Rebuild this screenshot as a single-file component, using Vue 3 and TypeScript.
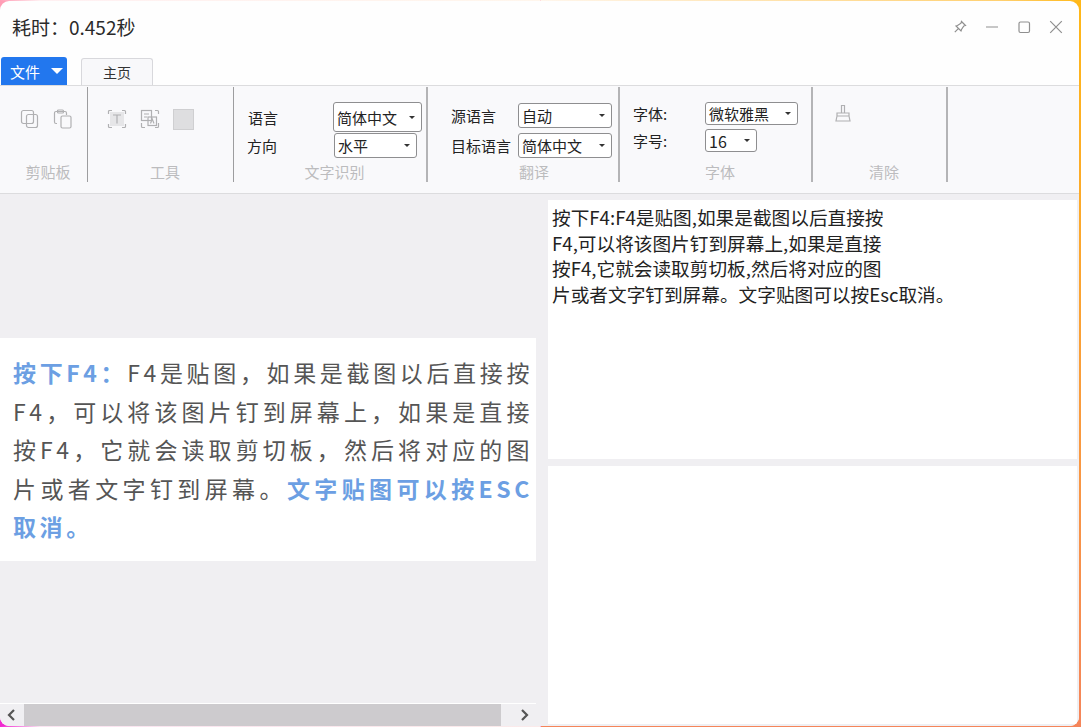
<script setup lang="ts">
interface Group {
  label: string
  width: number
}

interface Segment {
  text: string
  blue?: boolean
}

const groups: Group[] = [
  { label: '剪贴板', width: 88 },
  { label: '工具', width: 146 },
  { label: '文字识别', width: 194 },
  { label: '翻译', width: 192 },
  { label: '字体', width: 193 },
  { label: '清除', width: 135 },
]

// the picture on the left holds the text in fixed lines
const imageLines: Segment[][] = [
  [{ text: '按下F4：', blue: true }, { text: 'F4是贴图，如果是截图以后直接按' }],
  [{ text: 'F4，可以将该图片钉到屏幕上，如果是直接' }],
  [{ text: '按F4，它就会读取剪切板，然后将对应的图' }],
  [{ text: '片或者文字钉到屏幕。' }, { text: '文字贴图可以按ESC', blue: true }],
  [{ text: '取消。', blue: true }],
]
</script>

<template>
  <div class="window">
    <header class="title-bar">
      <span class="title-text">耗时：0.452秒</span>
      <div class="win-actions">
        <svg width="16" height="16" viewBox="0 0 16 16" class="win-icon">
          <path d="M9.500 2.500 13.500 6.500 11.800 7 9.500 10.500 9 12 4 7 5.500 6.500 9 4.200Z M6.300 9.700 2.800 13.200" />
        </svg>
        <svg width="16" height="16" viewBox="0 0 16 16" class="win-icon">
          <path d="M2 8H14" />
        </svg>
        <svg width="16" height="16" viewBox="0 0 16 16" class="win-icon">
          <rect x="3" y="3" width="10.500" height="10.500" rx="1.500" />
        </svg>
        <svg width="16" height="16" viewBox="0 0 16 16" class="win-icon">
          <path d="M2.200 2.200 13.800 13.800M13.800 2.200 2.200 13.800" />
        </svg>
      </div>
    </header>

    <div class="tab-row">
      <button class="file-btn">文件<span class="file-caret"></span></button>
      <div class="tab">主页</div>
    </div>

    <section class="ribbon">
      <!-- 剪贴板 -->
      <div class="group" :style="{ width: groups[0].width + 'px' }">
        <div class="group-body icons-clip">
          <svg width="20" height="20" viewBox="0 0 20 20" class="tool-icon">
            <rect x="1.500" y="1.500" width="12" height="13" rx="2" />
            <rect x="6.500" y="5.500" width="11" height="13" rx="2" />
          </svg>
          <svg width="20" height="20" viewBox="0 0 20 20" class="tool-icon">
            <path d="M4 14.500H3a1.500 1.500 0 0 1-1.500-1.500V4A1.500 1.500 0 0 1 3 2.500h9A1.500 1.500 0 0 1 13.500 4v2" />
            <rect x="4.500" y="1" width="6" height="3" rx="1" />
            <rect x="8" y="7" width="10" height="12" rx="1.500" />
          </svg>
        </div>
        <div class="group-label">{{ groups[0].label }}</div>
      </div>

      <!-- 工具 -->
      <div class="group" :style="{ width: groups[1].width + 'px' }">
        <div class="group-body icons-tool">
          <svg width="20" height="20" viewBox="0 0 20 20" class="tool-icon">
            <rect x="3" y="3" width="14" height="14" fill="#e6e6e8" stroke="none" />
            <path d="M1.500 5V2.500a1 1 0 0 1 1-1H5M15 1.500h2.500a1 1 0 0 1 1 1V5M18.500 15v2.500a1 1 0 0 1-1 1H15M5 18.500H2.500a1 1 0 0 1-1-1V15" />
            <path d="M6 6H14M10 6V14.500" />
          </svg>
          <svg width="20" height="20" viewBox="0 0 20 20" class="tool-icon">
            <path d="M1.500 14v3.500a1 1 0 0 0 1 1H5M15 18.500h2.500a1 1 0 0 0 1-1V14M15 1.500h2.500a1 1 0 0 1 1 1V5" />
            <rect x="1.500" y="1.500" width="10" height="10" />
            <rect x="8" y="8" width="8.500" height="8.500" />
            <path d="M4 5H9M4 8H7M10.500 14.500 12.200 10 14 14.500" />
          </svg>
          <span class="color-swatch"></span>
        </div>
        <div class="group-label">{{ groups[1].label }}</div>
      </div>

      <!-- 文字识别 -->
      <div class="group" :style="{ width: groups[2].width + 'px' }">
        <div class="group-body form-ocr">
          <div class="row">
            <span class="field-label label-ocr">语言</span>
            <div class="select select-tall">简体中文<i class="caret"></i></div>
          </div>
          <div class="row row-dir">
            <span class="field-label label-dir">方向</span>
            <div class="select select-dir">水平<i class="caret"></i></div>
          </div>
        </div>
        <div class="group-label">{{ groups[2].label }}</div>
      </div>

      <!-- 翻译 -->
      <div class="group group-trans" :style="{ width: groups[3].width + 'px' }">
        <div class="group-body form-trans">
          <div class="row">
            <span class="field-label label-trans">源语言</span>
            <div class="select select-trans">自动<i class="caret"></i></div>
          </div>
          <div class="row">
            <span class="field-label label-trans">目标语言</span>
            <div class="select select-trans">简体中文<i class="caret"></i></div>
          </div>
        </div>
        <div class="group-label">{{ groups[3].label }}</div>
      </div>

      <!-- 字体 -->
      <div class="group" :style="{ width: groups[4].width + 'px' }">
        <div class="group-body form-font">
          <div class="row">
            <span class="field-label label-font">字体:</span>
            <div class="select select-font">微软雅黑<i class="caret"></i></div>
          </div>
          <div class="row">
            <span class="field-label label-font">字号:</span>
            <div class="select select-size">16<i class="caret"></i></div>
          </div>
        </div>
        <div class="group-label">{{ groups[4].label }}</div>
      </div>

      <!-- 清除 -->
      <div class="group" :style="{ width: groups[5].width + 'px' }">
        <div class="group-body icons-clear">
          <svg width="18" height="20" viewBox="0 0 18 20" class="tool-icon">
            <path d="M7.500 10V2.500H10.500V10M3 10H15V13H3ZM3 13 2 18H16L15 13" />
          </svg>
        </div>
        <div class="group-label">{{ groups[5].label }}</div>
      </div>
    </section>

    <main class="content">
      <div class="left-pane">
        <div class="image-area">
          <div class="image-card">
            <div v-for="(line, i) in imageLines" :key="i" class="image-line">
              <span v-for="seg in line" :key="seg.text" :class="{ blue: seg.blue }">{{ seg.text }}</span>
            </div>
          </div>
        </div>
        <div class="h-scroll">
          <svg width="24" height="22" viewBox="0 0 24 22" class="scroll-arrow"><path d="M14 6 9 11 14 16" /></svg>
          <div class="scroll-thumb"></div>
          <svg width="24" height="22" viewBox="0 0 24 22" class="scroll-arrow"><path d="M10 6 15 11 10 16" /></svg>
        </div>
      </div>
      <div class="right-pane">
        <div class="text-panel">按下F4:F4是贴图,如果是截图以后直接按<br />F4,可以将该图片钉到屏幕上,如果是直接<br />按F4,它就会读取剪切板,然后将对应的图<br />片或者文字钉到屏幕。文字贴图可以按Esc取消。</div>
        <div class="text-panel"></div>
      </div>
    </main>
  </div>
</template>

<style>
html,
body {
  margin: 0;
  width: 1081px;
  height: 727px;
  overflow: hidden;
  background:
    linear-gradient(to right, #ff9db5, #fff0f2 40px, #fff6ec 100%) left top / 50% 1px no-repeat,
    linear-gradient(to right, #f02ad0, #fbe4f2 40px, #fbeaea 100%) left bottom / 50% 1px no-repeat,
    linear-gradient(to right, #fff6ec, #ffd070 85%, #ffb818 100%) right top / 50% 1px no-repeat,
    linear-gradient(to bottom, #ff9db5, #f02ad0) left top / 50% 100% no-repeat,
    linear-gradient(to bottom, #ffb818, #f5855a) right top / 50% 100% no-repeat;
}
</style>

<style scoped>
.window {
  width: 1079px;
  height: 725px;
  margin-top: 1px;
  display: flex;
  flex-direction: column;
  background: #fefefe;
  border-radius: 9px;
  overflow: hidden;
  font-family: "Noto Sans CJK SC", "Noto Sans", sans-serif;
  color: #222;
}

.title-bar {
  height: 56px;
  flex: none;
  display: flex;
  align-items: center;
  justify-content: space-between;
  padding: 0 15px 5px 12px;
  box-sizing: border-box;
}

.title-text {
  font-size: 19px;
  color: #2a2a2a;
}

.win-actions {
  display: flex;
  align-items: center;
  gap: 16px;
}

.win-icon {
  fill: none;
  stroke: #8f8f8f;
  stroke-width: 1.2;
}

.tab-row {
  height: 28px;
  flex: none;
  display: flex;
  align-items: flex-end;
  padding-left: 1px;
  gap: 14px;
}

.file-btn {
  width: 66px;
  height: 28px;
  border: none;
  padding: 0 0 0 9px;
  border-radius: 3px 3px 0 0;
  background: #2277ee;
  color: #fff;
  font: inherit;
  font-size: 15px;
  display: flex;
  align-items: center;
  gap: 11px;
}

.file-caret {
  border-left: 6px solid transparent;
  border-right: 6px solid transparent;
  border-top: 6px solid #fff;
}

.tab {
  width: 72px;
  height: 27px;
  box-sizing: border-box;
  border: 1px solid #d8d8dc;
  border-bottom: none;
  border-radius: 3px 3px 0 0;
  background: #f8f8fa;
  font-size: 14px;
  display: flex;
  align-items: center;
  justify-content: center;
  color: #333;
}

.ribbon {
  height: 109px;
  flex: none;
  box-sizing: border-box;
  display: flex;
  background: #f9f9fb;
  border-top: 1px solid #dcdcde;
  border-bottom: 1px solid #dcdcde;
  padding-top: 1px;
}

.group {
  height: 95px;
  flex: none;
  box-sizing: border-box;
  display: flex;
  flex-direction: column;
  border-right: 1px solid #9d9d9f;
}

.group:nth-child(n + 3) {
  border-right-width: 2px;
  border-right-color: #b4b4b6;
}

.group-body {
  height: 74px;
  box-sizing: border-box;
}

.group-label {
  text-align: center;
  font-size: 15px;
  line-height: 21px;
  padding-left: 9px;
  color: #bcbcbe;
}

.group-trans .group-label {
  padding-left: 22px;
}

.tool-icon {
  fill: none;
  stroke: #b0b0b2;
  stroke-width: 1.2;
}

.icons-clip {
  display: flex;
  gap: 13px;
  padding: 22px 0 0 20px;
}

.icons-tool {
  display: flex;
  gap: 13px;
  padding: 22px 0 0 19px;
}

.color-swatch {
  width: 21px;
  height: 21px;
  box-sizing: border-box;
  background: #dedee0;
  border: 1px solid #cfcfd1;
}

.icons-clear {
  padding: 16px 0 0 21px;
}

.row {
  display: flex;
  align-items: center;
}

.field-label {
  font-size: 15px;
  color: #222;
  white-space: nowrap;
}

.form-ocr {
  padding: 15px 0 0 14px;
}

.row-dir {
  margin-top: 1px;
}

.label-ocr {
  width: 85px;
}

.label-dir {
  width: 87px;
  margin-left: -1px;
}

.select {
  box-sizing: border-box;
  height: 25px;
  display: flex;
  align-items: center;
  justify-content: space-between;
  padding: 0 6px 0 3px;
  border: 1px solid #8e8e90;
  border-radius: 3px;
  background: #fff;
  font-size: 15px;
  color: #222;
}

.select-tall {
  width: 89px;
  height: 30px;
}

.select-dir {
  width: 83px;
}

.form-trans {
  padding: 16px 0 0 23px;
  display: flex;
  flex-direction: column;
  gap: 5px;
}

.label-trans {
  width: 67px;
}

.select-trans {
  width: 94px;
}

.form-font {
  padding: 15px 0 0 13px;
  display: flex;
  flex-direction: column;
  gap: 4px;
}

.label-font {
  width: 72px;
}

.select-font {
  width: 93px;
  height: 23px;
}

.select-size {
  width: 52px;
  height: 23px;
  font-size: 16px;
}

.caret {
  border-left: 3px solid transparent;
  border-right: 3px solid transparent;
  border-top: 3px solid #333;
}

.content {
  flex: 1;
  min-height: 0;
  display: flex;
  background: #f0eff2;
}

.left-pane {
  width: 536px;
  flex: none;
  display: flex;
  flex-direction: column;
}

.image-area {
  flex: 1;
  display: flex;
  align-items: center;
  min-height: 0;
  padding-top: 2px;
}

.image-card {
  width: 536px;
  height: 223px;
  box-sizing: border-box;
  padding: 15px 3px 0 13px;
  background: #fff;
  font-size: 23px;
  line-height: 38.500px;
  letter-spacing: 3.600px;
  color: #555;
}

.image-line {
  height: 38.500px;
  white-space: nowrap;
  text-align: justify;
  text-align-last: justify;
}

.image-line:last-child {
  text-align-last: left;
}

.blue {
  color: #6c9fe3;
  font-weight: 700;
}

.h-scroll {
  height: 23px;
  flex: none;
  display: flex;
  align-items: center;
  border-top: 1px solid #fff;
  box-sizing: border-box;
}

.scroll-thumb {
  width: 477px;
  height: 100%;
  margin-right: auto;
  background: #cdcbce;
}

.scroll-arrow {
  fill: none;
  stroke: #555;
  stroke-width: 2.200;
  flex: none;
}

.right-pane {
  flex: 1;
  display: flex;
  flex-direction: column;
  gap: 7px;
  padding: 6px 2px 2px 12px;
  min-width: 0;
}

.text-panel {
  flex: 1;
  background: #fff;
  font-size: 18.670px;
  line-height: 25.500px;
  padding: 4px 0 0 4px;
  color: #222;
  white-space: nowrap;
}
</style>
